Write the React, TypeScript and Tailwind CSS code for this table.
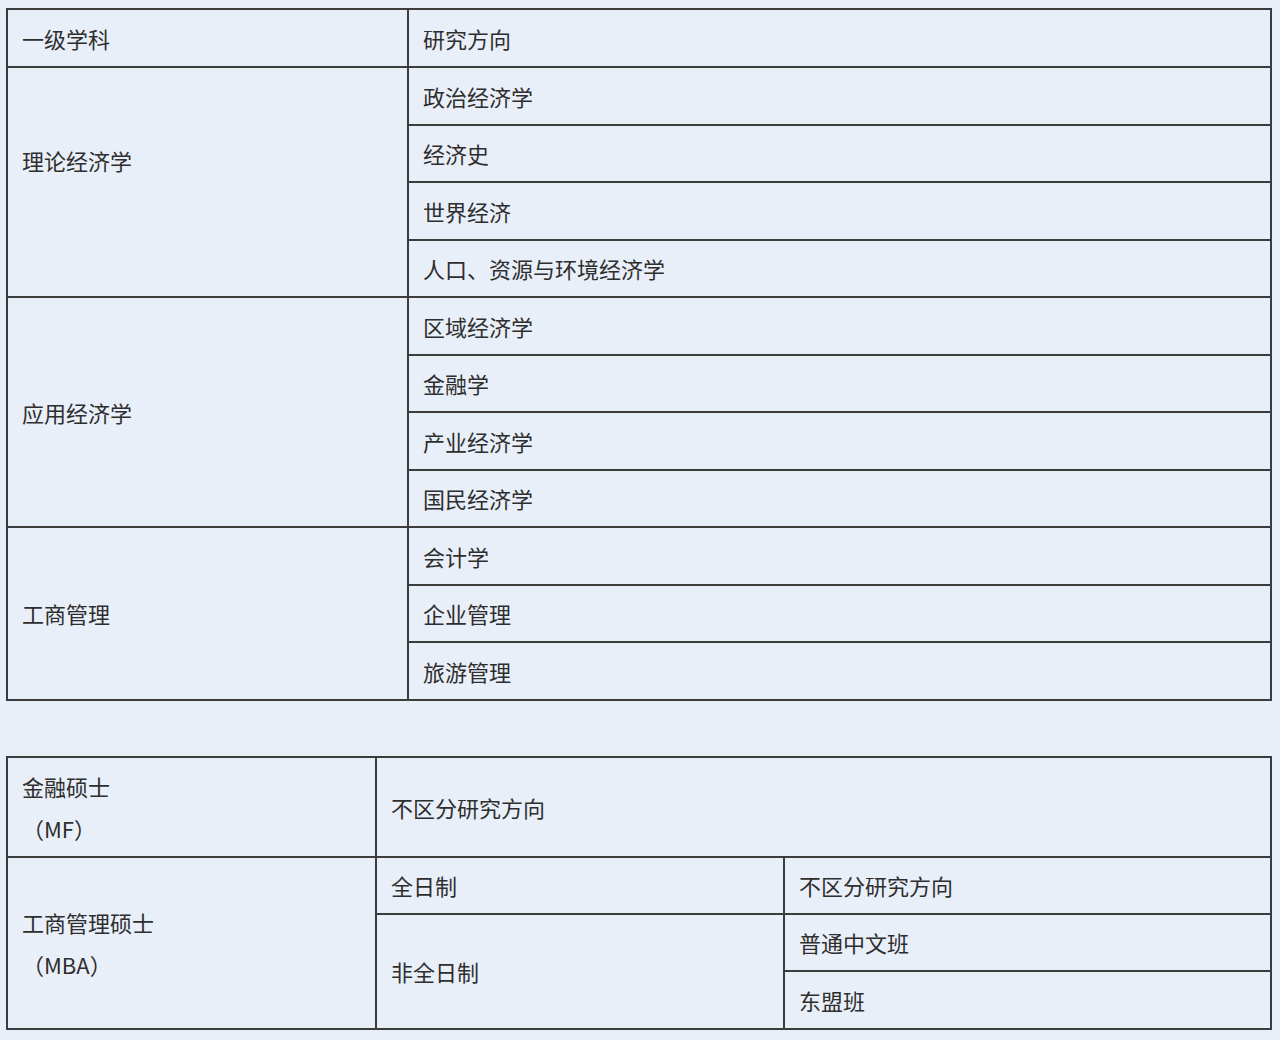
import React from "react";

const font = { fontFamily: '"Noto Sans CJK SC", "Noto Sans", sans-serif' };

const td = "border-2 border-[#3c3c3c] pl-[14px] pr-4 align-middle text-[22px] text-[#2e2e2e] leading-none";

export default function App() {
  const t1: [string, string[]][] = [
    ["理论经济学", ["政治经济学", "经济史", "世界经济", "人口、资源与环境经济学"]],
    ["应用经济学", ["区域经济学", "金融学", "产业经济学", "国民经济学"]],
    ["工商管理", ["会计学", "企业管理", "旅游管理"]],
  ];
  return (
    <div className="w-[1280px] h-[1040px] bg-[#e9eff9] pt-[8px] pl-[6px]" style={font}>
      <table className="border-collapse w-[1266px] table-fixed">
        <colgroup>
          <col className="w-[401px]" />
          <col />
        </colgroup>
        <tbody>
          <tr className="h-[58px]">
            <td className={td}>一级学科</td>
            <td className={td}>研究方向</td>
          </tr>
          {t1.map(([k, items], gi) =>
            items.map((it, i) => (
              <tr key={k + it} className="h-[57.5px]">
                {i === 0 && (
                  <td rowSpan={items.length} className={td + (gi === 0 ? " pb-[44px]" : "")}>
                    {k}
                  </td>
                )}
                <td className={td}>{it}</td>
              </tr>
            ))
          )}
        </tbody>
      </table>

      <table className="border-collapse w-[1266px] table-fixed mt-[55px]">
        <colgroup>
          <col className="w-[369px]" />
          <col className="w-[408px]" />
          <col />
        </colgroup>
        <tbody>
          <tr className="h-[100px]">
            <td className={td + " !leading-[42px]"}>
              金融硕士
              <br />
              （MF）
            </td>
            <td className={td} colSpan={2}>
              不区分研究方向
            </td>
          </tr>
          <tr className="h-[57px]">
            <td rowSpan={3} className={td + " !leading-[42px]"}>
              工商管理硕士
              <br />
              （MBA）
            </td>
            <td className={td}>全日制</td>
            <td className={td}>不区分研究方向</td>
          </tr>
          <tr className="h-[57px]">
            <td rowSpan={2} className={td}>
              非全日制
            </td>
            <td className={td}>普通中文班</td>
          </tr>
          <tr className="h-[58px]">
            <td className={td}>东盟班</td>
          </tr>
        </tbody>
      </table>
    </div>
  );
}
